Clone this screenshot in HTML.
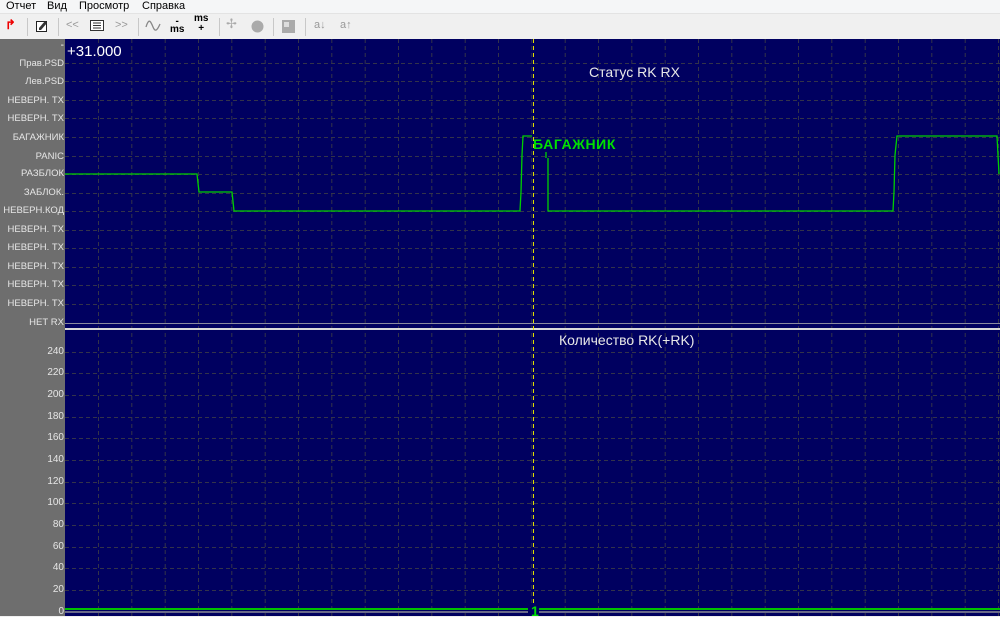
<!DOCTYPE html>
<html><head><meta charset="utf-8"><style>
body{margin:0;width:1000px;height:616px;overflow:hidden;background:#f0f0f0;font-family:"Liberation Sans",sans-serif;position:relative}
.menu{position:absolute;left:0;top:0;width:1000px;height:13px;background:#f5f6f7;font-size:11px;line-height:12px;color:#000}
.menu span{position:absolute;top:0}
.tb{position:absolute;left:0;top:13px;width:1000px;height:26px;background:#f0f0f0;border-top:1px solid #e3e3e3}
.tb span{position:absolute;top:5px;font-size:11px;color:#999}
.sep{position:absolute;top:4px;width:1px;height:18px;background:#c8c8c8}
.left{position:absolute;left:0;top:39px;width:65px;height:577px;background:#6e6e6e}
.lab{position:absolute;right:936px;font-size:9.5px;color:#e6e6e6;white-space:nowrap;line-height:10px}
</style></head><body>
<div class="menu"><span style="left:6px">Отчет</span><span style="left:47px">Вид</span><span style="left:79px">Просмотр</span><span style="left:142px">Справка</span></div>
<div class="tb">
<span style="left:5px;color:#e00;font-weight:bold;font-size:13px;top:3px">↱</span>
<div class="sep" style="left:27px"></div>
<svg style="position:absolute;left:35px;top:5px" width="14" height="14"><rect x="1.5" y="2.5" width="10" height="10" fill="#fff" stroke="#222"/><path d="M4 9l6-7 2 2-6 7H4z" fill="#333"/></svg>
<div class="sep" style="left:58px"></div>
<span style="left:66px">&lt;&lt;</span>
<svg style="position:absolute;left:90px;top:6px" width="14" height="11"><rect x=".5" y=".5" width="13" height="10" fill="#fff" stroke="#333"/><path d="M3 3h8M3 5.5h8M3 8h8" stroke="#333"/></svg>
<span style="left:115px">&gt;&gt;</span>
<div class="sep" style="left:138px"></div>
<svg style="position:absolute;left:145px;top:6px" width="16" height="12"><path d="M1 7C4-3 6 2 8 7s4 4 7-3" fill="none" stroke="#888" stroke-width="1.3"/></svg>
<span style="left:170px;color:#000;font-size:10px;top:4px;font-weight:bold;line-height:8px;text-align:center">-<br>ms</span>
<span style="left:194px;color:#000;font-size:10px;top:0px;font-weight:bold;line-height:10px;text-align:center">ms<br>+</span>
<div class="sep" style="left:219px"></div>
<span style="left:226px;color:#aaa;font-size:13px;top:2px">✢</span>
<svg style="position:absolute;left:251px;top:6px" width="13" height="13"><circle cx="6.5" cy="6.5" r="6" fill="#aaa"/></svg>
<div class="sep" style="left:273px"></div>
<svg style="position:absolute;left:282px;top:6px" width="13" height="13"><rect width="13" height="13" fill="#aaa"/><rect x="2" y="2" width="5" height="5" fill="#ddd"/></svg>
<div class="sep" style="left:305px"></div>
<span style="left:314px">a↓</span><span style="left:340px">a↑</span>
</div>
<div class="left"></div>
<div class="lab" style="top:59px">Прав.PSD</div>
<div class="lab" style="top:77px">Лев.PSD</div>
<div class="lab" style="top:96px">НЕВЕРН. TX</div>
<div class="lab" style="top:114px">НЕВЕРН. TX</div>
<div class="lab" style="top:133px">БАГАЖНИК</div>
<div class="lab" style="top:152px">PANIC</div>
<div class="lab" style="top:169px">РАЗБЛОК</div>
<div class="lab" style="top:188px">ЗАБЛОК.</div>
<div class="lab" style="top:206px">НЕВЕРН.КОД</div>
<div class="lab" style="top:225px">НЕВЕРН. TX</div>
<div class="lab" style="top:243px">НЕВЕРН. TX</div>
<div class="lab" style="top:262px">НЕВЕРН. TX</div>
<div class="lab" style="top:280px">НЕВЕРН. TX</div>
<div class="lab" style="top:299px">НЕВЕРН. TX</div>
<div class="lab" style="top:318px">НЕТ RX</div>
<div class="lab" style="top:347px;font-size:10px">240</div>
<div class="lab" style="top:368px;font-size:10px">220</div>
<div class="lab" style="top:390px;font-size:10px">200</div>
<div class="lab" style="top:412px;font-size:10px">180</div>
<div class="lab" style="top:433px;font-size:10px">160</div>
<div class="lab" style="top:455px;font-size:10px">140</div>
<div class="lab" style="top:477px;font-size:10px">120</div>
<div class="lab" style="top:498px;font-size:10px">100</div>
<div class="lab" style="top:520px;font-size:10px">80</div>
<div class="lab" style="top:542px;font-size:10px">60</div>
<div class="lab" style="top:563px;font-size:10px">40</div>
<div class="lab" style="top:585px;font-size:10px">20</div>
<div class="lab" style="top:607px;font-size:10px">0</div>
<div class="lab" style="top:41px;font-size:10px;color:#fff">-</div>
<svg style="position:absolute;left:65px;top:39px" width="935" height="577">
<rect width="935" height="577" fill="#000060"/>
<g stroke="#33334a" stroke-dasharray="4,3" stroke-width="1">
<path d="M33.5 0V577M66.8 0V577M100.2 0V577M133.5 0V577M166.8 0V577M200.2 0V577M233.5 0V577M266.8 0V577M300.2 0V577M333.5 0V577M366.8 0V577M400.2 0V577M433.5 0V577M466.8 0V577M500.2 0V577M533.5 0V577M566.8 0V577M600.2 0V577M633.5 0V577M666.8 0V577M700.2 0V577M733.5 0V577M766.8 0V577M800.2 0V577M833.5 0V577M866.8 0V577M900.2 0V577M933.5 0V577"/>
<path d="M0 24.5H935M0 42.5H935M0 61.5H935M0 79.5H935M0 98.5H935M0 117.5H935M0 135.5H935M0 154.5H935M0 172.5H935M0 191.5H935M0 209.5H935M0 228.5H935M0 246.5H935M0 265.5H935"/>
<path d="M0 313.5H935M0 334.5H935M0 356.5H935M0 378.5H935M0 399.5H935M0 421.5H935M0 443.5H935M0 464.5H935M0 486.5H935M0 508.5H935M0 529.5H935M0 551.5H935"/>
</g>
<path d="M0 284.5H935" stroke="#8a8aa0"/>
<rect y="289" width="935" height="2" fill="#d8d8d8"/>
<path d="M468.5 0V577" stroke="#e0e000" stroke-dasharray="4,3"/>
<g fill="none" stroke="#00d000" stroke-width="1.3">
<path d="M0 135H132L134 153H167L169 172H455L456 153L457 116L458 97H467"/>
<path d="M481 113V119M483 119V172H828L829 153L830 116L832 97H932L933 116L934 135"/>
</g>
<text x="468" y="110" font-size="14" font-weight="bold" fill="#00e000" font-family="Liberation Sans,sans-serif" letter-spacing="0.6">БАГАЖНИК</text>
<text x="524" y="38" font-size="14" fill="#e8e8e8" font-family="Liberation Sans,sans-serif">Статус RK RX</text>
<text x="494" y="306" font-size="14" fill="#e8e8e8" font-family="Liberation Sans,sans-serif">Количество RK(+RK)</text>
<text x="2" y="17" font-size="15" fill="#fff" font-family="Liberation Sans,sans-serif">+31.000</text>
<rect y="569" width="935" height="2" fill="#00c000"/>
<rect y="572" width="935" height="2" fill="#6a6a8a"/>
<rect x="463" y="565" width="11" height="12" fill="#000060"/>
<text x="466" y="577" font-size="14" font-weight="bold" fill="#00e000" font-family="Liberation Sans,sans-serif">1</text>
</svg>
</body></html>
